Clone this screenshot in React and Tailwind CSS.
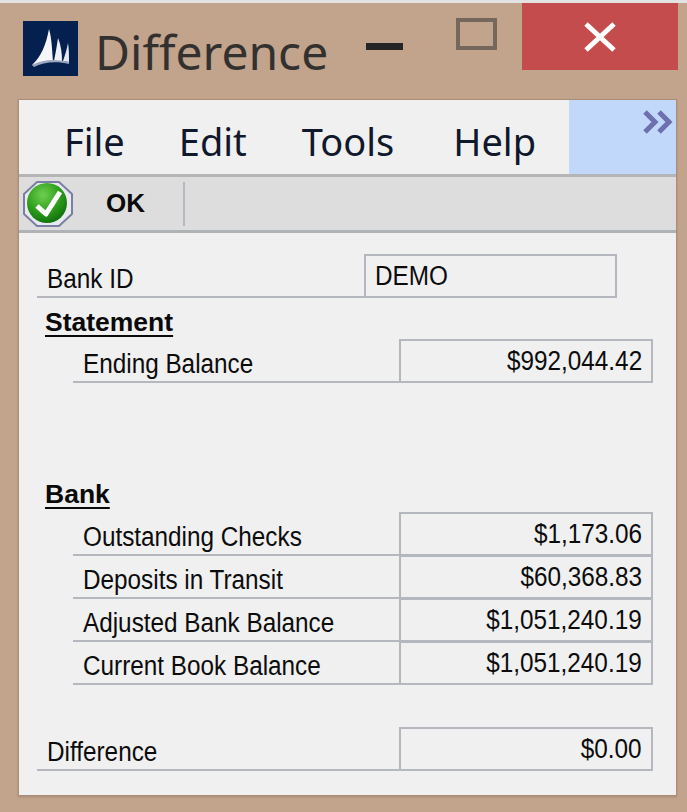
const textFont = "font-['Liberation_Sans',sans-serif]";

const Logo = () => (
  <svg width="55" height="55" viewBox="0 0 55 55" className="shrink-0">
    <rect width="55" height="55" fill="#04204f" />
    <path d="M9 44 C18 36 23 24 26 8 C29 18 29 30 30 40 Z" fill="#f4f6fa" />
    <path d="M31 40 C33 30 34 24 35 17 C38 24 39 32 39 40 Z" fill="#eef1f6" />
    <path d="M40 40 C42 34 44 28 45 22 C46 28 46 34 46 41 Z" fill="#e6eaf0" />
    <path d="M9 44 C20 38 34 38 46 41 L46 43 C34 40 20 41 11 46 Z" fill="#9aa7bf" />
  </svg>
);

const CheckIcon = () => (
  <svg width="52" height="48" viewBox="0 0 52 48" className="shrink-0">
    <defs>
      <radialGradient id="okGreen" cx="40%" cy="30%" r="75%">
        <stop offset="0%" stopColor="#6fd04f" />
        <stop offset="55%" stopColor="#2f9f1c" />
        <stop offset="100%" stopColor="#0d6c0c" />
      </radialGradient>
    </defs>
    <path d="M15 2 H37 L50 14 V34 L37 46 H15 L2 34 V14 Z" fill="#e8eaf0" stroke="#7a7fa3" strokeWidth="2" strokeLinejoin="round" />
    <circle cx="25" cy="23" r="20" fill="url(#okGreen)" />
    <path d="M15 26 L24 34 L38 12" fill="none" stroke="#fff" strokeWidth="5" strokeLinejoin="round" />
  </svg>
);

const Field = ({ label, value, rowClass, boxClass, textClass }) => (
  <div className={`flex items-end border-b-2 border-[#b4b7bd] ${rowClass}`}>
    <div className={`flex-1 pl-[10px] text-[27px] leading-[34px] text-[#0c0c0c] ${textFont}`}>
      <span className="inline-block origin-left scale-x-90 whitespace-nowrap">{label}</span>
    </div>
    <div className={`border-l-2 border-t-2 border-r-2 border-[#b4b7bd] h-[42px] text-[27px] leading-[40px] text-[#0c0c0c] ${textFont} ${boxClass}`}>
      <span className={`inline-block scale-x-90 whitespace-nowrap ${textClass}`}>{value}</span>
    </div>
  </div>
);

const Heading = ({ children, className }) => (
  <div className={`pl-[8px] font-bold text-[26.5px] leading-[30px] underline underline-offset-[4px] text-[#0a0a0a] ${textFont} ${className}`}>
    {children}
  </div>
);

const amountBox = "w-[254px] text-right pr-[9px]";

export default function App() {
  const rows = [
    ["Outstanding Checks", "$1,173.06"],
    ["Deposits in Transit", "$60,368.83"],
    ["Adjusted Bank Balance", "$1,051,240.19"],
    ["Current Book Balance", "$1,051,240.19"],
  ];
  return (
    <div className="w-[687px] h-[812px] bg-[#c2a38c] border-t-[3px] border-[#e3e3e3] overflow-hidden">
      <div className="flex h-[96px]">
        <div className="flex items-start pl-[23px] pt-[18px] gap-[17px] flex-1">
          <Logo />
          <span className="text-[48px] leading-[62px] text-[#33312f] font-['Noto_Sans',sans-serif] font-normal">Difference</span>
        </div>
        <div className="w-[37px] h-[7px] bg-[#252525] mt-[40px] mr-[53px]" />
        <div className="w-[41px] h-[32px] border-[4px] border-[#75675b] mt-[15px] mr-[25px]" />
        <div className="w-[156px] h-[67px] bg-[#c54c4c] flex items-center justify-center mr-[9px]">
          <svg width="34" height="30" viewBox="0 0 34 30">
            <path d="M3 2 L31 28 M31 2 L3 28" stroke="#fff" strokeWidth="5" />
          </svg>
        </div>
      </div>
      <div className="ml-[18px] mr-[10px] h-[697px] bg-[#f0f0f0] border border-[#ab8d78] shadow-[0_1px_2px_#a58a76]">
        <div className="flex h-[77px] border-b-[3px] border-[#b4b5b6]">
          <div className="flex-1 flex items-center pl-[45px] text-[38px] text-[#10182c] pt-[8px] font-['Noto_Sans',sans-serif]">
            <span>File</span>
            <span className="ml-[54px]">Edit</span>
            <span className="ml-[55px]">Tools</span>
            <span className="ml-[59px]">Help</span>
          </div>
          <div className="w-[107px] bg-[#c2d8fb] flex justify-end items-start pt-[10px] pr-[2px]">
            <svg width="32" height="24" viewBox="0 0 32 24">
              <path d="M3 2 L13 12 L3 22 M17 2 L27 12 L17 22" fill="none" stroke="#6d70ad" strokeWidth="5" />
            </svg>
          </div>
        </div>
        <div className="flex items-center h-[56px] bg-[#dcdddc] border-b-[3px] border-[#b0b3b6] pl-[3px]">
          <CheckIcon />
          <span className={`ml-[32px] w-[77px] font-bold text-[26px] text-[#0a0a0a] ${textFont}`}>OK</span>
          <div className="w-[2px] h-[44px] bg-[#b6b8c0]" />
        </div>
        <div className="pl-[18px] pt-[21px]">
          <Field label="Bank ID" value="DEMO" rowClass="w-[580px]" boxClass="w-[253px] pl-[9px]" textClass="origin-left" />
          <Heading className="mt-[9px]">Statement</Heading>
          <Field label="Ending Balance" value="$992,044.42" rowClass="ml-[36px] w-[580px] mt-[2px]" boxClass={amountBox} textClass="origin-right" />
          <Heading className="mt-[96px]">Bank</Heading>
          <div className="mt-[3px]">
            {rows.map(([label, value]) => (
              <Field key={label} label={label} value={value} rowClass="ml-[36px] w-[580px] -mb-px" boxClass={amountBox} textClass="origin-right" />
            ))}
          </div>
          <Field label="Difference" value="$0.00" rowClass="w-[616px] mt-[43px]" boxClass={amountBox} textClass="origin-right" />
        </div>
      </div>
    </div>
  );
}
